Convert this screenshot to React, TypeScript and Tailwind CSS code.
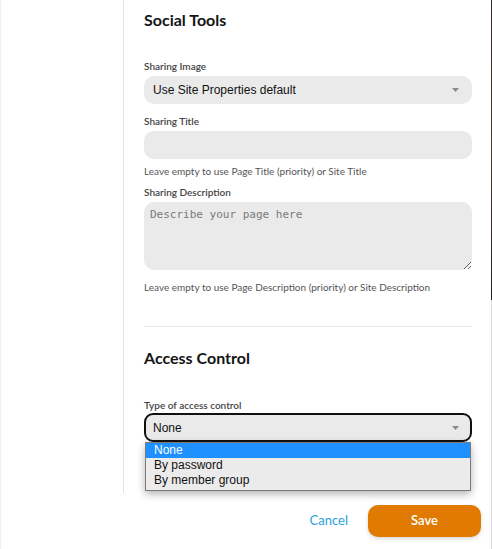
import React from 'react';

const lato = "font-['Lato','Liberation_Sans',sans-serif]";
const arial = "font-['Liberation_Sans','Arial',sans-serif]";

const Caret: React.FC = () => (
  <svg width="7" height="4" viewBox="0 0 7 4" className="shrink-0">
    <path d="M0 0h7L3.5 4z" fill="#8a8a8a" />
  </svg>
);

const Label: React.FC<{ text: string; className?: string }> = ({ text, className = '' }) => (
  <p className={`${lato} text-[10px] leading-[14px] font-semibold text-[#444] ${className}`}>{text}</p>
);

const Help: React.FC<{ text: string; className?: string }> = ({ text, className = '' }) => (
  <p className={`${lato} text-[10px] leading-[14px] text-[#555] ${className}`}>{text}</p>
);

const options = ['None', 'By password', 'By member group'];

export default function App() {
  return (
    <div className="w-[492px] h-[549px] flex bg-white overflow-hidden">
      <div className="w-[491px] flex flex-col border-l border-[#f0f0f0]">
        <div className="h-[493px] flex">
          {/* left rail */}
          <div className="w-[122px]" />

          {/* settings column */}
          <div className="flex-1 border-l border-[#e3e3e3] pl-[20px] pr-[19px] pt-[10px] flex flex-col">
            <h2 className={`${lato} text-[16px] leading-[20px] font-bold text-[#141414]`}>Social Tools</h2>

            <Label text="Sharing Image" className="mt-[29px] mb-[3px]" />
            <div className="h-[28px] rounded-[10px] bg-[#eaeaea] flex items-center justify-between pl-[9px] pr-[13px]">
              <span className={`${arial} text-[12px] text-[#111]`}>Use Site Properties default</span>
              <Caret />
            </div>

            <Label text="Sharing Title" className="mt-[10px] mb-[3px]" />
            <div className="h-[28px] rounded-[10px] bg-[#eaeaea]" />
            <Help text="Leave empty to use Page Title (priority) or Site Title" className="mt-[5px]" />

            <Label text="Sharing Description" className="mt-[7px] mb-[3px]" />
            <textarea
              placeholder="Describe your page here"
              className="h-[68px] rounded-[10px] bg-[#eaeaea] px-[6px] py-[6px] font-['DejaVu_Sans_Mono',monospace] text-[11px] leading-[14px] text-[#111] placeholder:text-[#7a7a7a] outline-none resize-y"
            />
            <Help text="Leave empty to use Page Description (priority) or Site Description" className="mt-[10px]" />

            <div className="mt-[32px] h-px bg-[#e8e8e8]" />

            <h2 className={`${lato} mt-[21px] text-[16px] leading-[20px] font-bold text-[#141414]`}>Access Control</h2>

            <Label text="Type of access control" className="mt-[30px] mb-[1px]" />
            <div className="relative">
              <div className="h-[29px] rounded-[9px] border-2 border-[#111] bg-[#eaeaea] flex items-center justify-between pl-[7px] pr-[11px]">
                <span className={`${arial} text-[12px] text-[#111]`}>None</span>
                <Caret />
              </div>
              {/* open option list */}
              <ul className="absolute left-px right-px top-full z-10 border border-[#7a7a7a] bg-[#ebebeb] shadow-[0_3px_8px_rgba(0,0,0,0.3)]">
                {options.map((o, i) => (
                  <li
                    key={o}
                    className={`${arial} text-[12px] leading-[15px] pl-[8px] ${
                      i === 0 ? 'bg-[#1e90ff] text-white' : 'text-[#111]'
                    } ${i === 2 ? 'h-[17px]' : 'h-[15px]'}`}
                  >
                    {o}
                  </li>
                ))}
              </ul>
            </div>
          </div>
        </div>

        {/* footer actions */}
        <div className="flex-1 flex items-center justify-end pr-[10px] pb-[1px] gap-[20px]">
          <button className={`${lato} text-[13px] text-[#2ba3dc]`}>Cancel</button>
          <button
            className={`${lato} w-[113px] h-[32px] rounded-[10px] bg-[#e17a00] text-white text-[13px] font-semibold shadow-[0_2px_4px_rgba(0,0,0,0.15)]`}
          >
            Save
          </button>
        </div>
      </div>

      {/* backdrop edge */}
      <div className="w-px flex flex-col">
        <div className="h-[300px] bg-gradient-to-b from-[#2b2726] via-[#4a3a32] to-[#1d1d22]" />
        <div className="flex-1 bg-[#dcdcdc]" />
      </div>
    </div>
  );
}
